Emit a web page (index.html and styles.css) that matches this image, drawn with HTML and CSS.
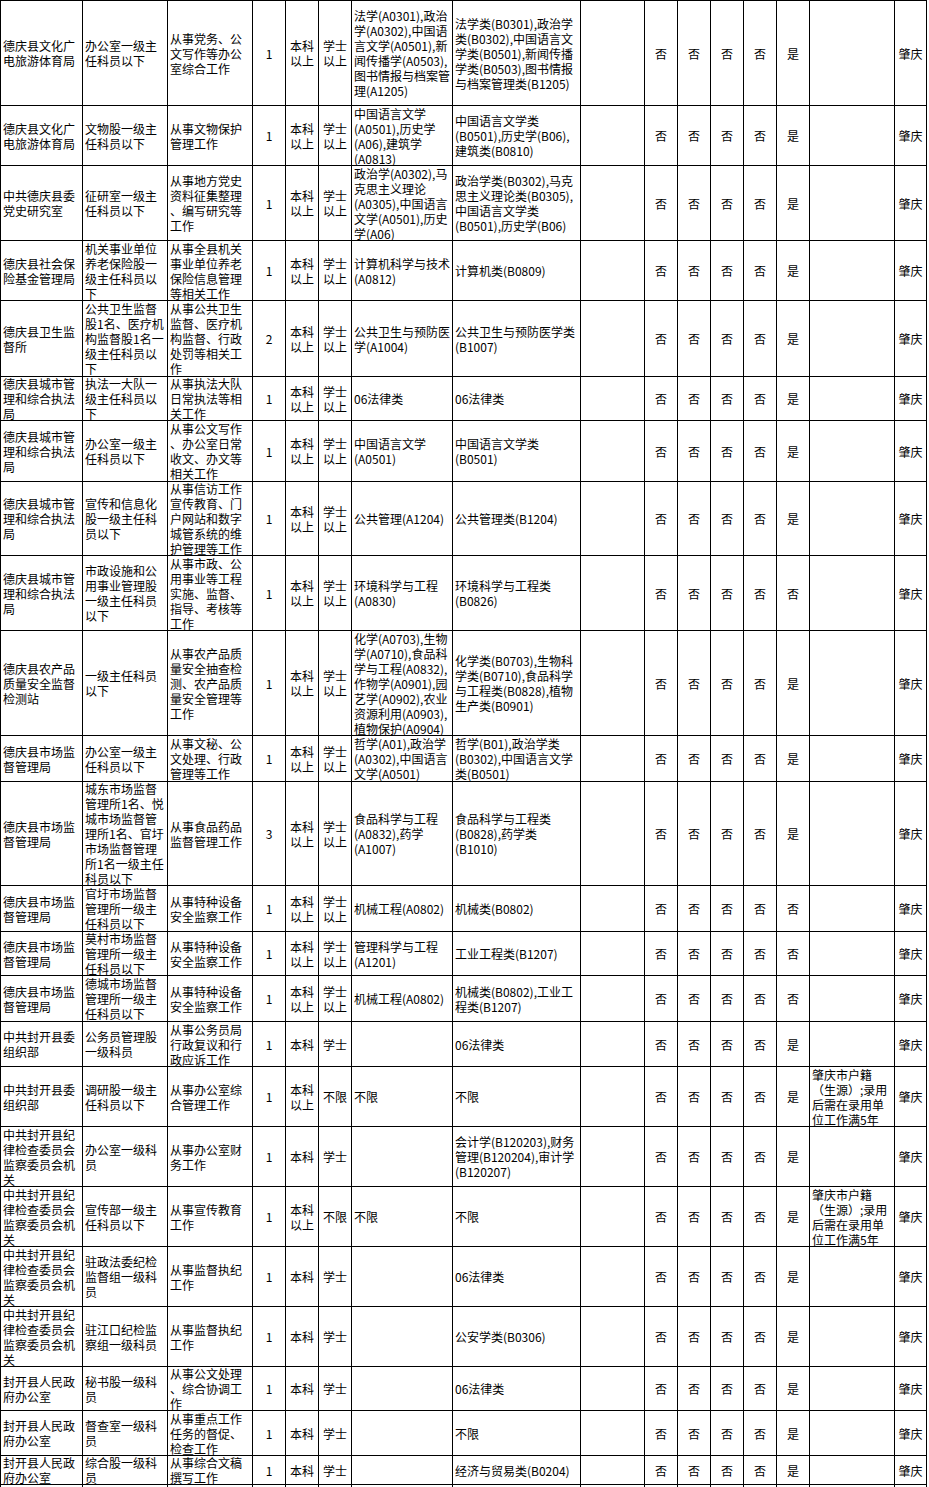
FILE: index.html
```html
<!DOCTYPE html>
<html lang="zh-CN">
<head>
<meta charset="utf-8">
<title>职位表</title>
<link rel="stylesheet" href="styles.css">
</head>
<body>
<div class="sheet">
<!-- row 1 -->
<div class="c">德庆县文化广<br>电旅游体育局</div><div class="c">办公室一级主<br>任科员以下</div><div class="c">从事党务、公<br>文写作等办公<br>室综合工作</div><div class="m">1</div><div class="m">本科<br>以上</div><div class="m">学士<br>以上</div><div class="c">法学(A0301),政治<br>学(A0302),中国语<br>言文学(A0501),新<br>闻传播学(A0503),<br>图书情报与档案管<br>理(A1205)</div><div class="c">法学类(B0301),政治学<br>类(B0302),中国语言文<br>学类(B0501),新闻传播<br>学类(B0503),图书情报<br>与档案管理类(B1205)</div><div class="c"></div><div class="m">否</div><div class="m">否</div><div class="m">否</div><div class="m">否</div><div class="m">是</div><div class="c"></div><div class="m">肇庆</div>
<!-- row 2 -->
<div class="c">德庆县文化广<br>电旅游体育局</div><div class="c">文物股一级主<br>任科员以下</div><div class="c">从事文物保护<br>管理工作</div><div class="m">1</div><div class="m">本科<br>以上</div><div class="m">学士<br>以上</div><div class="c">中国语言文学<br>(A0501),历史学<br>(A06),建筑学<br>(A0813)</div><div class="c">中国语言文学类<br>(B0501),历史学(B06),<br>建筑类(B0810)</div><div class="c"></div><div class="m">否</div><div class="m">否</div><div class="m">否</div><div class="m">否</div><div class="m">是</div><div class="c"></div><div class="m">肇庆</div>
<!-- row 3 -->
<div class="c">中共德庆县委<br>党史研究室</div><div class="c">征研室一级主<br>任科员以下</div><div class="c">从事地方党史<br>资料征集整理<br>、编写研究等<br>工作</div><div class="m">1</div><div class="m">本科<br>以上</div><div class="m">学士<br>以上</div><div class="c">政治学(A0302),马<br>克思主义理论<br>(A0305),中国语言<br>文学(A0501),历史<br>学(A06)</div><div class="c">政治学类(B0302),马克<br>思主义理论类(B0305),<br>中国语言文学类<br>(B0501),历史学(B06)</div><div class="c"></div><div class="m">否</div><div class="m">否</div><div class="m">否</div><div class="m">否</div><div class="m">是</div><div class="c"></div><div class="m">肇庆</div>
<!-- row 4 -->
<div class="c">德庆县社会保<br>险基金管理局</div><div class="c">机关事业单位<br>养老保险股一<br>级主任科员以<br>下</div><div class="c">从事全县机关<br>事业单位养老<br>保险信息管理<br>等相关工作</div><div class="m">1</div><div class="m">本科<br>以上</div><div class="m">学士<br>以上</div><div class="c">计算机科学与技术<br>(A0812)</div><div class="c">计算机类(B0809)</div><div class="c"></div><div class="m">否</div><div class="m">否</div><div class="m">否</div><div class="m">否</div><div class="m">是</div><div class="c"></div><div class="m">肇庆</div>
<!-- row 5 -->
<div class="c">德庆县卫生监<br>督所</div><div class="c">公共卫生监督<br>股1名、医疗机<br>构监督股1名一<br>级主任科员以<br>下</div><div class="c">从事公共卫生<br>监督、医疗机<br>构监督、行政<br>处罚等相关工<br>作</div><div class="m">2</div><div class="m">本科<br>以上</div><div class="m">学士<br>以上</div><div class="c">公共卫生与预防医<br>学(A1004)</div><div class="c">公共卫生与预防医学类<br>(B1007)</div><div class="c"></div><div class="m">否</div><div class="m">否</div><div class="m">否</div><div class="m">否</div><div class="m">是</div><div class="c"></div><div class="m">肇庆</div>
<!-- row 6 -->
<div class="c">德庆县城市管<br>理和综合执法<br>局</div><div class="c">执法一大队一<br>级主任科员以<br>下</div><div class="c">从事执法大队<br>日常执法等相<br>关工作</div><div class="m">1</div><div class="m">本科<br>以上</div><div class="m">学士<br>以上</div><div class="c">06法律类</div><div class="c">06法律类</div><div class="c"></div><div class="m">否</div><div class="m">否</div><div class="m">否</div><div class="m">否</div><div class="m">是</div><div class="c"></div><div class="m">肇庆</div>
<!-- row 7 -->
<div class="c">德庆县城市管<br>理和综合执法<br>局</div><div class="c">办公室一级主<br>任科员以下</div><div class="c">从事公文写作<br>、办公室日常<br>收文、办文等<br>相关工作</div><div class="m">1</div><div class="m">本科<br>以上</div><div class="m">学士<br>以上</div><div class="c">中国语言文学<br>(A0501)</div><div class="c">中国语言文学类<br>(B0501)</div><div class="c"></div><div class="m">否</div><div class="m">否</div><div class="m">否</div><div class="m">否</div><div class="m">是</div><div class="c"></div><div class="m">肇庆</div>
<!-- row 8 -->
<div class="c">德庆县城市管<br>理和综合执法<br>局</div><div class="c">宣传和信息化<br>股一级主任科<br>员以下</div><div class="c">从事信访工作<br>宣传教育、门<br>户网站和数字<br>城管系统的维<br>护管理等工作</div><div class="m">1</div><div class="m">本科<br>以上</div><div class="m">学士<br>以上</div><div class="c">公共管理(A1204)</div><div class="c">公共管理类(B1204)</div><div class="c"></div><div class="m">否</div><div class="m">否</div><div class="m">否</div><div class="m">否</div><div class="m">是</div><div class="c"></div><div class="m">肇庆</div>
<!-- row 9 -->
<div class="c">德庆县城市管<br>理和综合执法<br>局</div><div class="c">市政设施和公<br>用事业管理股<br>一级主任科员<br>以下</div><div class="c">从事市政、公<br>用事业等工程<br>实施、监督、<br>指导、考核等<br>工作</div><div class="m">1</div><div class="m">本科<br>以上</div><div class="m">学士<br>以上</div><div class="c">环境科学与工程<br>(A0830)</div><div class="c">环境科学与工程类<br>(B0826)</div><div class="c"></div><div class="m">否</div><div class="m">否</div><div class="m">否</div><div class="m">否</div><div class="m">否</div><div class="c"></div><div class="m">肇庆</div>
<!-- row 10 -->
<div class="c">德庆县农产品<br>质量安全监督<br>检测站</div><div class="c">一级主任科员<br>以下</div><div class="c">从事农产品质<br>量安全抽查检<br>测、农产品质<br>量安全管理等<br>工作</div><div class="m">1</div><div class="m">本科<br>以上</div><div class="m">学士<br>以上</div><div class="c">化学(A0703),生物<br>学(A0710),食品科<br>学与工程(A0832),<br>作物学(A0901),园<br>艺学(A0902),农业<br>资源利用(A0903),<br>植物保护(A0904)</div><div class="c">化学类(B0703),生物科<br>学类(B0710),食品科学<br>与工程类(B0828),植物<br>生产类(B0901)</div><div class="c"></div><div class="m">否</div><div class="m">否</div><div class="m">否</div><div class="m">否</div><div class="m">是</div><div class="c"></div><div class="m">肇庆</div>
<!-- row 11 -->
<div class="c">德庆县市场监<br>督管理局</div><div class="c">办公室一级主<br>任科员以下</div><div class="c">从事文秘、公<br>文处理、行政<br>管理等工作</div><div class="m">1</div><div class="m">本科<br>以上</div><div class="m">学士<br>以上</div><div class="c">哲学(A01),政治学<br>(A0302),中国语言<br>文学(A0501)</div><div class="c">哲学(B01),政治学类<br>(B0302),中国语言文学<br>类(B0501)</div><div class="c"></div><div class="m">否</div><div class="m">否</div><div class="m">否</div><div class="m">否</div><div class="m">是</div><div class="c"></div><div class="m">肇庆</div>
<!-- row 12 -->
<div class="c">德庆县市场监<br>督管理局</div><div class="c">城东市场监督<br>管理所1名、悦<br>城市场监督管<br>理所1名、官圩<br>市场监督管理<br>所1名一级主任<br>科员以下</div><div class="c">从事食品药品<br>监督管理工作</div><div class="m">3</div><div class="m">本科<br>以上</div><div class="m">学士<br>以上</div><div class="c">食品科学与工程<br>(A0832),药学<br>(A1007)</div><div class="c">食品科学与工程类<br>(B0828),药学类<br>(B1010)</div><div class="c"></div><div class="m">否</div><div class="m">否</div><div class="m">否</div><div class="m">否</div><div class="m">是</div><div class="c"></div><div class="m">肇庆</div>
<!-- row 13 -->
<div class="c">德庆县市场监<br>督管理局</div><div class="c">官圩市场监督<br>管理所一级主<br>任科员以下</div><div class="c">从事特种设备<br>安全监察工作</div><div class="m">1</div><div class="m">本科<br>以上</div><div class="m">学士<br>以上</div><div class="c">机械工程(A0802)</div><div class="c">机械类(B0802)</div><div class="c"></div><div class="m">否</div><div class="m">否</div><div class="m">否</div><div class="m">否</div><div class="m">否</div><div class="c"></div><div class="m">肇庆</div>
<!-- row 14 -->
<div class="c">德庆县市场监<br>督管理局</div><div class="c">莫村市场监督<br>管理所一级主<br>任科员以下</div><div class="c">从事特种设备<br>安全监察工作</div><div class="m">1</div><div class="m">本科<br>以上</div><div class="m">学士<br>以上</div><div class="c">管理科学与工程<br>(A1201)</div><div class="c">工业工程类(B1207)</div><div class="c"></div><div class="m">否</div><div class="m">否</div><div class="m">否</div><div class="m">否</div><div class="m">否</div><div class="c"></div><div class="m">肇庆</div>
<!-- row 15 -->
<div class="c">德庆县市场监<br>督管理局</div><div class="c">德城市场监督<br>管理所一级主<br>任科员以下</div><div class="c">从事特种设备<br>安全监察工作</div><div class="m">1</div><div class="m">本科<br>以上</div><div class="m">学士<br>以上</div><div class="c">机械工程(A0802)</div><div class="c">机械类(B0802),工业工<br>程类(B1207)</div><div class="c"></div><div class="m">否</div><div class="m">否</div><div class="m">否</div><div class="m">否</div><div class="m">否</div><div class="c"></div><div class="m">肇庆</div>
<!-- row 16 -->
<div class="c">中共封开县委<br>组织部</div><div class="c">公务员管理股<br>一级科员</div><div class="c">从事公务员局<br>行政复议和行<br>政应诉工作</div><div class="m">1</div><div class="m">本科</div><div class="m">学士</div><div class="c"></div><div class="c">06法律类</div><div class="c"></div><div class="m">否</div><div class="m">否</div><div class="m">否</div><div class="m">否</div><div class="m">是</div><div class="c"></div><div class="m">肇庆</div>
<!-- row 17 -->
<div class="c">中共封开县委<br>组织部</div><div class="c">调研股一级主<br>任科员以下</div><div class="c">从事办公室综<br>合管理工作</div><div class="m">1</div><div class="m">本科<br>以上</div><div class="m">不限</div><div class="c">不限</div><div class="c">不限</div><div class="c"></div><div class="m">否</div><div class="m">否</div><div class="m">否</div><div class="m">否</div><div class="m">是</div><div class="c">肇庆市户籍<br>（生源）;录用<br>后需在录用单<br>位工作满5年</div><div class="m">肇庆</div>
<!-- row 18 -->
<div class="c">中共封开县纪<br>律检查委员会<br>监察委员会机<br>关</div><div class="c">办公室一级科<br>员</div><div class="c">从事办公室财<br>务工作</div><div class="m">1</div><div class="m">本科</div><div class="m">学士</div><div class="c"></div><div class="c">会计学(B120203),财务<br>管理(B120204),审计学<br>(B120207)</div><div class="c"></div><div class="m">否</div><div class="m">否</div><div class="m">否</div><div class="m">否</div><div class="m">是</div><div class="c"></div><div class="m">肇庆</div>
<!-- row 19 -->
<div class="c">中共封开县纪<br>律检查委员会<br>监察委员会机<br>关</div><div class="c">宣传部一级主<br>任科员以下</div><div class="c">从事宣传教育<br>工作</div><div class="m">1</div><div class="m">本科<br>以上</div><div class="m">不限</div><div class="c">不限</div><div class="c">不限</div><div class="c"></div><div class="m">否</div><div class="m">否</div><div class="m">否</div><div class="m">否</div><div class="m">是</div><div class="c">肇庆市户籍<br>（生源）;录用<br>后需在录用单<br>位工作满5年</div><div class="m">肇庆</div>
<!-- row 20 -->
<div class="c">中共封开县纪<br>律检查委员会<br>监察委员会机<br>关</div><div class="c">驻政法委纪检<br>监督组一级科<br>员</div><div class="c">从事监督执纪<br>工作</div><div class="m">1</div><div class="m">本科</div><div class="m">学士</div><div class="c"></div><div class="c">06法律类</div><div class="c"></div><div class="m">否</div><div class="m">否</div><div class="m">否</div><div class="m">否</div><div class="m">是</div><div class="c"></div><div class="m">肇庆</div>
<!-- row 21 -->
<div class="c">中共封开县纪<br>律检查委员会<br>监察委员会机<br>关</div><div class="c">驻江口纪检监<br>察组一级科员</div><div class="c">从事监督执纪<br>工作</div><div class="m">1</div><div class="m">本科</div><div class="m">学士</div><div class="c"></div><div class="c">公安学类(B0306)</div><div class="c"></div><div class="m">否</div><div class="m">否</div><div class="m">否</div><div class="m">否</div><div class="m">是</div><div class="c"></div><div class="m">肇庆</div>
<!-- row 22 -->
<div class="c">封开县人民政<br>府办公室</div><div class="c">秘书股一级科<br>员</div><div class="c">从事公文处理<br>、综合协调工<br>作</div><div class="m">1</div><div class="m">本科</div><div class="m">学士</div><div class="c"></div><div class="c">06法律类</div><div class="c"></div><div class="m">否</div><div class="m">否</div><div class="m">否</div><div class="m">否</div><div class="m">是</div><div class="c"></div><div class="m">肇庆</div>
<!-- row 23 -->
<div class="c">封开县人民政<br>府办公室</div><div class="c">督查室一级科<br>员</div><div class="c">从事重点工作<br>任务的督促、<br>检查工作</div><div class="m">1</div><div class="m">本科</div><div class="m">学士</div><div class="c"></div><div class="c">不限</div><div class="c"></div><div class="m">否</div><div class="m">否</div><div class="m">否</div><div class="m">否</div><div class="m">是</div><div class="c"></div><div class="m">肇庆</div>
<!-- row 24 -->
<div class="c">封开县人民政<br>府办公室</div><div class="c">综合股一级科<br>员</div><div class="c">从事综合文稿<br>撰写工作</div><div class="m">1</div><div class="m">本科</div><div class="m">学士</div><div class="c"></div><div class="c">经济与贸易类(B0204)</div><div class="c"></div><div class="m">否</div><div class="m">否</div><div class="m">否</div><div class="m">否</div><div class="m">是</div><div class="c"></div><div class="m">肇庆</div>
<!-- row 25 (cut off) -->
<div class="c"></div><div class="c"></div><div class="c"></div><div class="m"></div><div class="m"></div><div class="m"></div><div class="c"></div><div class="c"></div><div class="c"></div><div class="m"></div><div class="m"></div><div class="m"></div><div class="m"></div><div class="m"></div><div class="c"></div><div class="m"></div>
</div>
</body>
</html>
```

FILE: styles.css
```css
html, body {
  margin: 0;
  padding: 0;
  background: #fff;
}

body {
  overflow: hidden;
  font-family: "Noto Sans CJK SC", "Liberation Sans", sans-serif;
  font-size: 12px;
  line-height: 15px;
  color: #000;
}

.sheet {
  display: grid;
  width: max-content;
  grid-template-columns: 81px 84px 84px 32px 32px 32px 100px 127px 63px 32px 32px 32px 32px 32px 84px 31px;
  grid-template-rows: 104px 59px 74px 59px 75px 43px 60px 73px 74px 104px 45px 103px 45px 43px 45px 44px 59px 59px 59px 59px 59px 43px 44px 28px 20px;
  gap: 1px;
  padding: 1px;
  background: #000;
}

.c,
.m {
  background: #fff;
  display: flex;
  align-items: center;
  overflow: hidden;
  white-space: nowrap;
  min-width: 0;
  min-height: 0;
}

.c {
  padding-left: 2px;
}

.m {
  justify-content: center;
  text-align: center;
}
```
